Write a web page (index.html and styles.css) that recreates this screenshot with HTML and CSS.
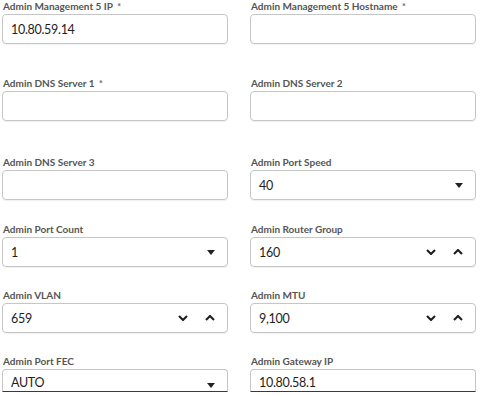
FILE: index.html
```html
<!DOCTYPE html>
<html lang="en">
<head>
  <meta charset="UTF-8" />
  <title>Admin Network Settings</title>
  <link rel="stylesheet" href="styles.css">
</head>
<body>

  <div class="form">
    <!-- Management -->
    <div class="row r1">
      <div class="field">
        <label>Admin Management 5 IP <span class="req">*</span></label>
        <div class="box"><span class="val">10.80.59.14</span></div>
      </div>
      <div class="field">
        <label>Admin Management 5 Hostname <span class="req">*</span></label>
        <div class="box"></div>
      </div>
    </div>

    <!-- DNS -->
    <div class="row r2">
      <div class="field">
        <label>Admin DNS Server 1 <span class="req">*</span></label>
        <div class="box"></div>
      </div>
      <div class="field">
        <label>Admin DNS Server 2</label>
        <div class="box"></div>
      </div>
    </div>

    <div class="row r3">
      <div class="field">
        <label>Admin DNS Server 3</label>
        <div class="box"></div>
      </div>
      <div class="field">
        <label>Admin Port Speed</label>
        <div class="box"><span class="val">40</span><span class="caret"></span></div>
      </div>
    </div>

    <!-- Port -->
    <div class="row">
      <div class="field">
        <label>Admin Port Count</label>
        <div class="box"><span class="val">1</span><span class="caret"></span></div>
      </div>
      <div class="field">
        <label>Admin Router Group</label>
        <div class="box">
          <span class="val">160</span>
          <svg class="chev" viewBox="0 0 10 6"><path d="M1 1 L5 5 L9 1" /></svg>
          <svg class="chev" viewBox="0 0 10 6"><path d="M1 5 L5 1 L9 5" /></svg>
        </div>
      </div>
    </div>

    <div class="row">
      <div class="field">
        <label>Admin VLAN</label>
        <div class="box">
          <span class="val">659</span>
          <svg class="chev" viewBox="0 0 10 6"><path d="M1 1 L5 5 L9 1" /></svg>
          <svg class="chev" viewBox="0 0 10 6"><path d="M1 5 L5 1 L9 5" /></svg>
        </div>
      </div>
      <div class="field">
        <label>Admin MTU</label>
        <div class="box">
          <span class="val">9,100</span>
          <svg class="chev" viewBox="0 0 10 6"><path d="M1 1 L5 5 L9 1" /></svg>
          <svg class="chev" viewBox="0 0 10 6"><path d="M1 5 L5 1 L9 5" /></svg>
        </div>
      </div>
    </div>

    <div class="row last">
      <div class="field">
        <label>Admin Port FEC</label>
        <div class="box cut"><span class="val">AUTO</span><span class="caret"></span></div>
      </div>
      <div class="field">
        <label>Admin Gateway IP</label>
        <div class="box cut"><span class="val">10.80.58.1</span></div>
      </div>
    </div>
  </div>

</body>
</html>
```

FILE: styles.css
```css
* { margin:0; padding:0; box-sizing: border-box; }
body {
  background: #fff;
  font-family: Lato, 'Noto Sans', sans-serif;
  color: #2b2b2b;
  overflow: hidden;
}
.form {
  padding: 0 4px 0 2px;
}
.row {
  display: grid;
  grid-template-columns: 226px 226px;
  column-gap: 22px;
  margin-bottom: 22px;
}
.row.r1 { margin-bottom: 33px; }
.row.r2 { margin-bottom: 35px; }
.row.r3 { margin-bottom: 23px; }
.row.last { margin-bottom: 0; }
label {
  display: block;
  height: 12px;
  margin-bottom: 2px;
  padding-left: 1px;
  font-size: 10px;
  line-height: 12px;
  font-weight: bold;
  color: #555;
}
.req { font-size: 9px; color: #666; margin-left: 2px; }
.box {
  height: 30px;
  border: 1px solid #c6c6c6;
  border-radius: 4px;
  box-shadow: 0 1px 1px rgba(0,0,0,0.06);
  display: flex;
  align-items: center;
  padding: 0 12px 0 8px;
}
.box.cut {
  height: 23px;
  border-bottom: 1.5px solid #3a3a3a;
  border-radius: 4px 4px 0 0;
  align-items: flex-start;
  padding-top: 5px;
}
.val {
  flex: 1;
  font-size: 12.5px;
  letter-spacing: -0.3px;
  color: #1e1e1e;
}
.caret {
  width: 0; height: 0;
  border-left: 4px solid transparent;
  border-right: 4px solid transparent;
  border-top: 5px solid #222;
}
.cut .caret { margin-top: 8px; }
.chev {
  width: 10px;
  height: 6px;
  margin-left: 17px;
  fill: none;
  stroke: #1e1e1e;
  stroke-width: 2.1;
}
```
